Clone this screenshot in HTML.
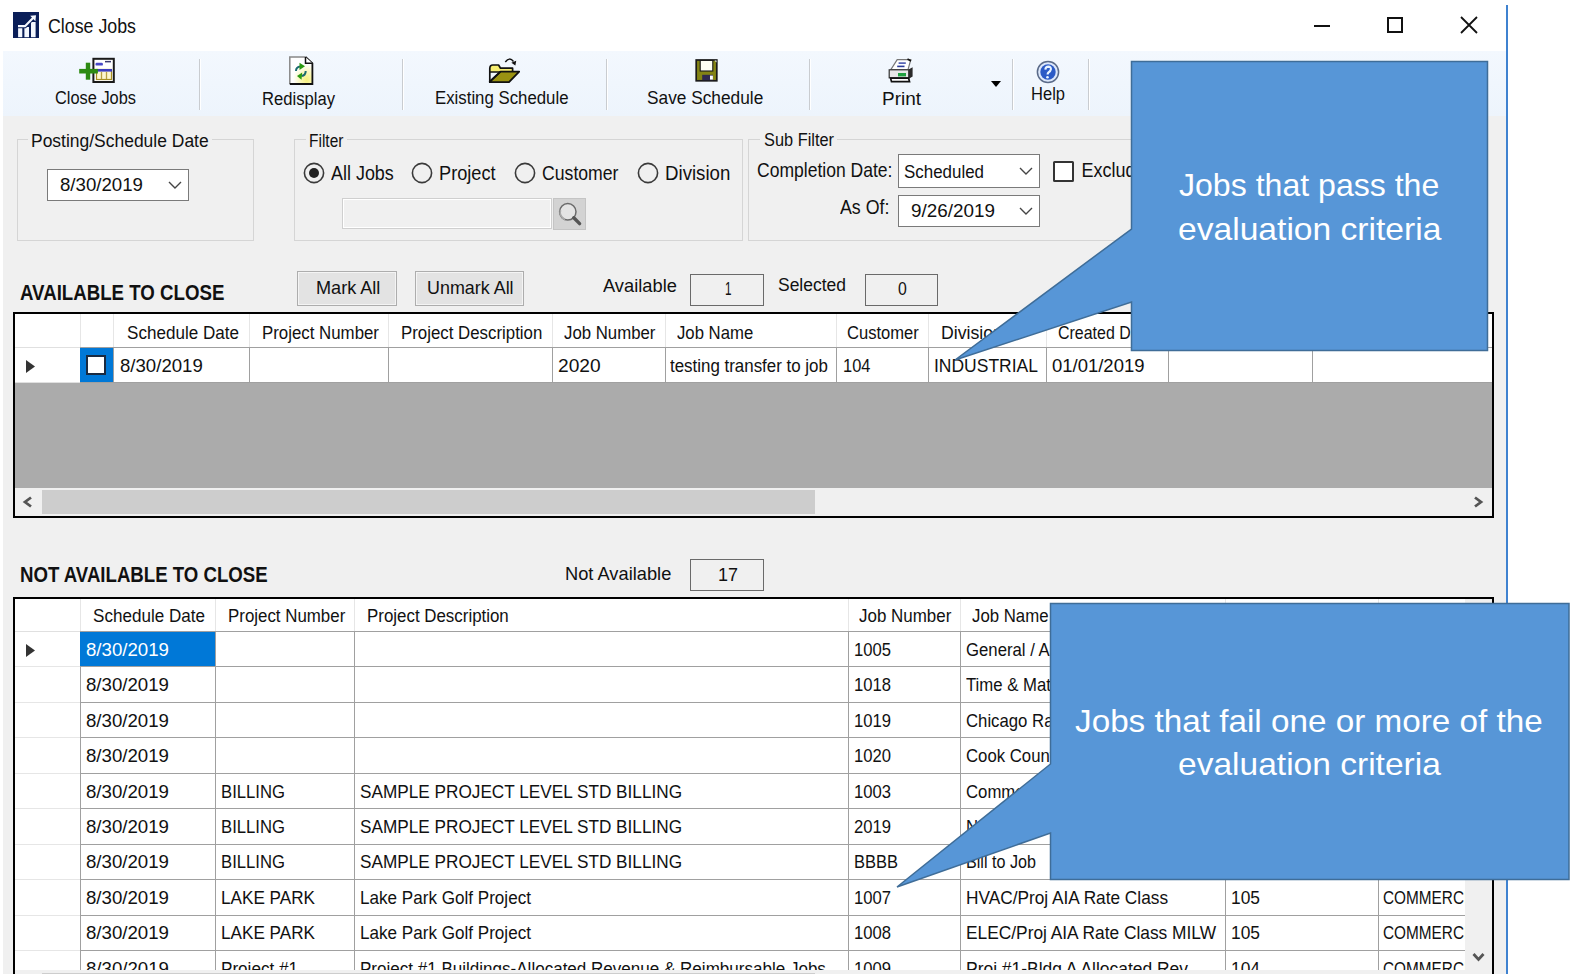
<!DOCTYPE html>
<html><head><meta charset="utf-8"><style>
html,body{margin:0;padding:0;}
body{width:1574px;height:974px;position:relative;overflow:hidden;background:#fff;font-family:"Liberation Sans",sans-serif;}
.r{position:absolute;}
.t{position:absolute;white-space:nowrap;line-height:1;transform-origin:0 0;}
.clip2{position:absolute;left:0;top:0;width:1465px;height:970px;overflow:hidden;}
</style></head><body>
<div class="r" style="left:3px;top:51px;width:1503px;height:923px;background:#f0f0f0"></div>
<svg class="r" style="left:13px;top:12px" width="26" height="26" viewBox="0 0 26 26">
<rect width="26" height="26" fill="#0a1e58"/>
<rect x="5.1" y="15.6" width="4.2" height="9.6" fill="#f4f8ff"/><rect x="11.4" y="15" width="4.6" height="10.2" fill="#f4f8ff"/><rect x="18" y="10" width="4.6" height="15.2" fill="#f4f8ff"/>
<path d="M5 14.2 H12 L20.5 5.6" stroke="#0a1e58" stroke-width="4" fill="none"/>
<path d="M5 14.2 H12 L20.5 5.6" stroke="#f4f8ff" stroke-width="2.2" fill="none"/>
<path d="M17.2 3.8 L23 3.3 L22.4 9.2Z" fill="#f4f8ff"/>
</svg>
<div class="t" style="left:48.0px;top:16.9px;font-size:19px;color:#111;transform-origin:0 16.09px;transform:scale(0.9365,1.070);">Close Jobs</div>
<div class="r" style="left:1314px;top:25px;width:16px;height:2px;background:#111"></div>
<div class="r" style="left:1387px;top:17px;width:16px;height:16px;border:2px solid #111;box-sizing:border-box"></div>
<svg class="r" style="left:1460px;top:16px" width="18" height="18" viewBox="0 0 18 18"><path d="M1 1L17 17M17 1L1 17" stroke="#111" stroke-width="1.8"/></svg>
<div class="r" style="left:1506px;top:5px;width:2px;height:969px;background:#3f82d0"></div>
<div class="r" style="left:3px;top:51px;width:1503px;height:65px;background:linear-gradient(#f3f8fe,#edf4fc)"></div>
<div class="r" style="left:199px;top:59px;width:1px;height:51px;background:#c9ccd0"></div>
<div class="r" style="left:200px;top:59px;width:1px;height:51px;background:#ffffff"></div>
<div class="r" style="left:402px;top:59px;width:1px;height:51px;background:#c9ccd0"></div>
<div class="r" style="left:403px;top:59px;width:1px;height:51px;background:#ffffff"></div>
<div class="r" style="left:606px;top:59px;width:1px;height:51px;background:#c9ccd0"></div>
<div class="r" style="left:607px;top:59px;width:1px;height:51px;background:#ffffff"></div>
<div class="r" style="left:809px;top:59px;width:1px;height:51px;background:#c9ccd0"></div>
<div class="r" style="left:810px;top:59px;width:1px;height:51px;background:#ffffff"></div>
<div class="r" style="left:1012px;top:59px;width:1px;height:51px;background:#c9ccd0"></div>
<div class="r" style="left:1013px;top:59px;width:1px;height:51px;background:#ffffff"></div>
<div class="r" style="left:1088px;top:59px;width:1px;height:51px;background:#c9ccd0"></div>
<div class="r" style="left:1089px;top:59px;width:1px;height:51px;background:#ffffff"></div>
<svg class="r" style="left:70px;top:50px" width="60" height="40" viewBox="0 0 60 40">
<rect x="23.4" y="8.8" width="20.4" height="23.2" fill="#fff" stroke="#1a1a1a" stroke-width="2"/>
<rect x="26.5" y="19.5" width="15" height="10" fill="#fdf6d0" stroke="#a89020" stroke-width="1.2"/>
<rect x="26" y="19" width="16" height="2.6" fill="#3c3cc0"/>
<path d="M31.5 22v7M36.5 22v7" stroke="#b8a040" stroke-width="1.3"/>
<rect x="25.5" y="12.7" width="7.4" height="2.9" rx="1.2" fill="#4848c8"/><rect x="35" y="10.9" width="6" height="1.5" fill="#3a3a70"/>
<rect x="9.2" y="18.9" width="18.7" height="4.6" fill="#2d8a12"/><rect x="15.8" y="12.7" width="4.4" height="17" fill="#2d8a12"/>
</svg>
<div class="t" style="left:55.0px;top:88.8px;font-size:18px;color:#111;transform-origin:0 15.24px;transform:scale(0.9095,1.070);">Close Jobs</div>
<svg class="r" style="left:280px;top:50px" width="40" height="40" viewBox="0 0 40 40">
<defs><radialGradient id="yg" cx="0.75" cy="0.85" r="0.6"><stop offset="0" stop-color="#f6f07a"/><stop offset="1" stop-color="#ffffff"/></radialGradient></defs>
<path d="M9.8 7 H25.5 L32.4 13.3 V34 H9.8 Z" fill="url(#yg)"/>
<path d="M9.8 34 V7 H25.5" stroke="#888" stroke-width="1.5" fill="none"/>
<path d="M25.5 7 L32.4 13.3 V34 H9.8" stroke="#111" stroke-width="1.8" fill="none"/>
<path d="M25.5 7 V13.3 H32.4" stroke="#111" stroke-width="1.5" fill="#fff"/>
<path d="M16 21 Q16 17 20.5 16.5" stroke="#1a6a70" stroke-width="2" fill="none"/>
<path d="M19.5 12.8 L25 16.3 L19.5 20 Z" fill="#2a9a10"/>
<path d="M25.7 21 Q25.7 25.5 21.5 26" stroke="#1a6a70" stroke-width="2" fill="none"/>
<path d="M22.2 22.5 L17 26 L21.5 29.8 Z" fill="#2a9a10"/>
</svg>
<div class="t" style="left:262.0px;top:89.6px;font-size:18px;color:#111;transform-origin:0 15.24px;transform:scale(0.9233,1.070);">Redisplay</div>
<svg class="r" style="left:480px;top:50px" width="50" height="40" viewBox="0 0 50 40">
<path d="M9.8 32 V18.6 Q9.8 15 12.8 15 H18.6 L20.5 18.2 H32.6 V22 H9.8Z" fill="#f6ee70" stroke="#111" stroke-width="1.7" stroke-linejoin="round"/>
<path d="M20.5 21.7 H39.2 L29 32.2 H9.8 V31.5 Z" fill="#9a9212" stroke="#111" stroke-width="1.8" stroke-linejoin="round"/>
<path d="M9.8 31.8 L20.5 21.7" stroke="#111" stroke-width="1.6"/>
<path d="M25.3 12 Q29.5 6.5 33.5 11.5" stroke="#111" stroke-width="1.5" fill="none"/>
<path d="M31.3 12.8 L36.2 10.8 L35.4 15.6 Z" fill="#111"/>
</svg>
<div class="t" style="left:434.7px;top:88.8px;font-size:18px;color:#111;transform-origin:0 15.24px;transform:scale(0.9329,1.070);">Existing Schedule</div>
<svg class="r" style="left:690px;top:52px" width="34" height="36" viewBox="0 0 34 36">
<rect x="6.2" y="8" width="20.6" height="20.8" fill="#848414" stroke="#1a1a1a" stroke-width="1.7"/>
<rect x="10.2" y="8.4" width="12.6" height="10.6" fill="#fffff4" stroke="#1a1a1a" stroke-width="1.1"/>
<rect x="12.2" y="22.8" width="10.8" height="5.4" fill="#302a50"/>
<rect x="20" y="23.6" width="2.9" height="4" fill="#fff"/>
<path d="M24.5 8.5 L26.5 8.5 L26.5 10.5Z" fill="#fff"/>
</svg>
<div class="t" style="left:647.0px;top:88.8px;font-size:18px;color:#111;transform-origin:0 15.24px;transform:scale(0.9603,1.070);">Save Schedule</div>
<svg class="r" style="left:882px;top:52px" width="40" height="36" viewBox="0 0 40 36">
<path d="M15.2 7.6 H28.8 L26 17.6 H8.8 Z" fill="#fff" stroke="#777" stroke-width="1.2"/>
<path d="M16.6 11.1 H23.8" stroke="#3a4aa8" stroke-width="1.5"/><path d="M15.2 14.4 H22.5" stroke="#2a3a98" stroke-width="1.6"/>
<path d="M26.5 17.6 L30.6 15.2 V24.6 L26.5 27 Z" fill="#2a2a2a"/>
<rect x="7.2" y="17.8" width="19.5" height="8" fill="#e6e6e6" stroke="#333" stroke-width="1.2"/>
<rect x="16" y="21" width="8" height="3.4" fill="#20a040"/>
<path d="M8.6 26.2 H26.6 L27.5 29.6 H9.5 Z" fill="#fff" stroke="#111" stroke-width="1.7"/>
<path d="M25.5 7 L29 9" stroke="#111" stroke-width="1.6"/>
</svg>
<div class="t" style="left:882.0px;top:90.0px;font-size:18px;color:#111;transform-origin:0 15.24px;transform:scale(1.0536,1.070);">Print</div>
<svg class="r" style="left:991px;top:81px" width="10" height="7" viewBox="0 0 10 7"><path d="M0 0H10L5 6Z" fill="#000"/></svg>
<svg class="r" style="left:1036px;top:60px" width="24" height="24" viewBox="0 0 24 24">
<circle cx="12" cy="12" r="10.6" fill="#dde8fb" stroke="#5a6a88" stroke-width="1.5"/>
<circle cx="12" cy="12" r="7.7" fill="#2b5ac6"/>
<path d="M9.3 9.6 Q9.6 6.6 12.4 6.6 Q15.2 6.8 14.9 9.3 Q14.6 11 12.6 12.4 Q11.6 13.3 11.6 14.6" stroke="#e8f4ff" stroke-width="2.1" fill="none"/>
<circle cx="11.5" cy="17.2" r="1.3" fill="#e8f4ff"/>
</svg>
<div class="t" style="left:1031.0px;top:85.4px;font-size:18px;color:#111;transform-origin:0 15.24px;transform:scale(0.9181,1.070);">Help</div>
<div class="r" style="left:17px;top:139px;width:237px;height:102px;border:1px solid #d5d5d5;box-sizing:border-box"></div>
<div class="r" style="left:28px;top:137px;width:184px;height:5px;background:#f0f0f0"></div>
<div class="t" style="left:31.0px;top:131.5px;font-size:18px;color:#111;transform-origin:0 15.24px;transform:scale(0.9702,1.070);">Posting/Schedule Date</div>
<div class="r" style="left:294px;top:139px;width:449px;height:102px;border:1px solid #d5d5d5;box-sizing:border-box"></div>
<div class="r" style="left:306px;top:137px;width:41px;height:5px;background:#f0f0f0"></div>
<div class="t" style="left:309.0px;top:131.6px;font-size:18px;color:#111;transform-origin:0 15.24px;transform:scale(0.8597,1.070);">Filter</div>
<div class="r" style="left:748px;top:139px;width:452px;height:102px;border:1px solid #d5d5d5;box-sizing:border-box"></div>
<div class="r" style="left:760px;top:137px;width:77px;height:5px;background:#f0f0f0"></div>
<div class="t" style="left:763.5px;top:130.8px;font-size:18px;color:#111;transform-origin:0 15.24px;transform:scale(0.9085,1.070);">Sub Filter</div>
<div class="r" style="left:47px;top:169px;width:142px;height:32px;background:#fff;border:1.5px solid #7a7a7a;box-sizing:border-box"></div>
<div class="t" style="left:60.0px;top:176.3px;font-size:18px;color:#111;transform-origin:0 15.24px;transform:scale(1.0361,1.070);">8/30/2019</div>
<svg class="r" style="left:167.5px;top:181.0px" width="14" height="9" viewBox="0 0 14 9"><path d="M1 1L7 7L13 1" stroke="#444" stroke-width="1.4" fill="none"/></svg>
<svg class="r" style="left:303px;top:162px" width="22" height="22" viewBox="0 0 22 22"><circle cx="11" cy="11" r="9.6" fill="none" stroke="#3a3a3a" stroke-width="1.6"/><circle cx="11" cy="11" r="5" fill="#222"/></svg>
<div class="t" style="left:331.0px;top:165.3px;font-size:18px;color:#111;transform-origin:0 15.24px;transform:scale(0.9963,1.130);">All Jobs</div>
<svg class="r" style="left:411px;top:162px" width="22" height="22" viewBox="0 0 22 22"><circle cx="11" cy="11" r="9.6" fill="none" stroke="#3a3a3a" stroke-width="1.6"/></svg>
<div class="t" style="left:439.0px;top:165.3px;font-size:18px;color:#111;transform-origin:0 15.24px;transform:scale(1.0102,1.130);">Project</div>
<svg class="r" style="left:514px;top:162px" width="22" height="22" viewBox="0 0 22 22"><circle cx="11" cy="11" r="9.6" fill="none" stroke="#3a3a3a" stroke-width="1.6"/></svg>
<div class="t" style="left:542.0px;top:165.3px;font-size:18px;color:#111;transform-origin:0 15.24px;transform:scale(0.9802,1.130);">Customer</div>
<svg class="r" style="left:636.5px;top:162px" width="22" height="22" viewBox="0 0 22 22"><circle cx="11" cy="11" r="9.6" fill="none" stroke="#3a3a3a" stroke-width="1.6"/></svg>
<div class="t" style="left:665.0px;top:165.3px;font-size:18px;color:#111;transform-origin:0 15.24px;transform:scale(1.0376,1.130);">Division</div>
<div class="r" style="left:342px;top:198px;width:210px;height:31px;background:#f0f0f0;border:1.5px solid #cfcfcf;box-shadow:inset 1px 1px 0 #fff, inset -1px -1px 0 #fff;box-sizing:border-box"></div>
<svg class="r" style="left:553px;top:198px" width="33" height="32" viewBox="0 0 33 32">
<rect x="0.5" y="0.5" width="32" height="31" fill="#d3d3d3" stroke="#c4c4c4" stroke-width="1"/>
<circle cx="14.8" cy="13.8" r="8.2" fill="#e4e4e4" stroke="#6a6a6a" stroke-width="1.5"/>
<path d="M7.5 12 A8 8 0 0 0 12 21.5" stroke="#aaa" stroke-width="1.6" fill="none"/>
<path d="M20.8 19.8 L26.6 25.6" stroke="#555" stroke-width="3.4" stroke-linecap="round"/>
</svg>
<div class="t" style="left:756.5px;top:162.0px;font-size:18px;color:#111;transform-origin:0 15.24px;transform:scale(0.9741,1.120);">Completion Date:</div>
<div class="r" style="left:898px;top:154px;width:142px;height:34px;background:#fff;border:1.5px solid #7a7a7a;box-sizing:border-box"></div>
<div class="t" style="left:904.0px;top:162.8px;font-size:18px;color:#111;transform-origin:0 15.24px;transform:scale(0.9401,1.070);">Scheduled</div>
<svg class="r" style="left:1018.5px;top:167.0px" width="14" height="9" viewBox="0 0 14 9"><path d="M1 1L7 7L13 1" stroke="#444" stroke-width="1.4" fill="none"/></svg>
<div class="r" style="left:1053px;top:161px;width:21px;height:21px;background:#fff;border:2px solid #333;border-radius:1.5px;box-sizing:border-box"></div>
<div class="t" style="left:1081.5px;top:161.8px;font-size:18px;color:#111;transform-origin:0 15.24px;transform:scale(1.0000,1.120);">Exclude Closed</div>
<div class="t" style="left:840.0px;top:199.4px;font-size:18px;color:#111;transform-origin:0 15.24px;transform:scale(0.9880,1.120);">As Of:</div>
<div class="r" style="left:898px;top:195px;width:142px;height:32px;background:#fff;border:1.5px solid #7a7a7a;box-sizing:border-box"></div>
<div class="t" style="left:910.8px;top:201.8px;font-size:18px;color:#111;transform-origin:0 15.24px;transform:scale(1.0486,1.070);">9/26/2019</div>
<svg class="r" style="left:1018.5px;top:207.0px" width="14" height="9" viewBox="0 0 14 9"><path d="M1 1L7 7L13 1" stroke="#444" stroke-width="1.4" fill="none"/></svg>
<div class="t" style="left:19.6px;top:283.7px;font-size:19px;font-weight:bold;color:#111;transform-origin:0 16.09px;transform:scale(0.9828,1.120);">AVAILABLE TO CLOSE</div>
<div class="r" style="left:297px;top:271px;width:100px;height:35px;background:#e3e3e3;border:1.5px solid #adadad;box-shadow:inset 1px 1px 0 #f4f4f4, inset -1px -1px 0 #f4f4f4;box-sizing:border-box"></div>
<div class="t" style="left:315.6px;top:279.0px;font-size:18px;color:#111;transform-origin:0 15.24px;transform:scale(1.0060,1.070);">Mark All</div>
<div class="r" style="left:415px;top:271px;width:109px;height:35px;background:#e3e3e3;border:1.5px solid #adadad;box-shadow:inset 1px 1px 0 #f4f4f4, inset -1px -1px 0 #f4f4f4;box-sizing:border-box"></div>
<div class="t" style="left:426.8px;top:279.0px;font-size:18px;color:#111;transform-origin:0 15.24px;transform:scale(0.9950,1.070);">Unmark All</div>
<div class="t" style="left:603.4px;top:277.4px;font-size:18px;color:#111;transform-origin:0 15.24px;transform:scale(1.0160,1.070);">Available</div>
<div class="r" style="left:690px;top:274px;width:74px;height:32px;border:1.5px solid #6a6a6a;box-sizing:border-box"></div>
<div class="t" style="left:725.0px;top:279.8px;font-size:18px;color:#111;transform-origin:0 15.24px;transform:scale(0.6490,1.070);">1</div>
<div class="t" style="left:778.0px;top:276.2px;font-size:18px;color:#111;transform-origin:0 15.24px;transform:scale(0.9706,1.070);">Selected</div>
<div class="r" style="left:865px;top:274px;width:73px;height:32px;border:1.5px solid #6a6a6a;box-sizing:border-box"></div>
<div class="t" style="left:897.5px;top:279.8px;font-size:18px;color:#111;transform-origin:0 15.24px;transform:scale(0.8786,1.070);">0</div>
<div class="r" style="left:13px;top:312px;width:1481px;height:206px;background:#fff;border:2px solid #000;box-sizing:border-box"></div>
<div class="r" style="left:80px;top:314px;width:1px;height:33px;background:#e6e6e6"></div>
<div class="r" style="left:80px;top:348px;width:1px;height:34px;background:#a0a0a0"></div>
<div class="r" style="left:113px;top:314px;width:1px;height:33px;background:#e6e6e6"></div>
<div class="r" style="left:113px;top:348px;width:1px;height:34px;background:#a0a0a0"></div>
<div class="r" style="left:249px;top:314px;width:1px;height:33px;background:#e6e6e6"></div>
<div class="r" style="left:249px;top:348px;width:1px;height:34px;background:#a0a0a0"></div>
<div class="r" style="left:388px;top:314px;width:1px;height:33px;background:#e6e6e6"></div>
<div class="r" style="left:388px;top:348px;width:1px;height:34px;background:#a0a0a0"></div>
<div class="r" style="left:552px;top:314px;width:1px;height:33px;background:#e6e6e6"></div>
<div class="r" style="left:552px;top:348px;width:1px;height:34px;background:#a0a0a0"></div>
<div class="r" style="left:665px;top:314px;width:1px;height:33px;background:#e6e6e6"></div>
<div class="r" style="left:665px;top:348px;width:1px;height:34px;background:#a0a0a0"></div>
<div class="r" style="left:836px;top:314px;width:1px;height:33px;background:#e6e6e6"></div>
<div class="r" style="left:836px;top:348px;width:1px;height:34px;background:#a0a0a0"></div>
<div class="r" style="left:928px;top:314px;width:1px;height:33px;background:#e6e6e6"></div>
<div class="r" style="left:928px;top:348px;width:1px;height:34px;background:#a0a0a0"></div>
<div class="r" style="left:1046px;top:314px;width:1px;height:33px;background:#e6e6e6"></div>
<div class="r" style="left:1046px;top:348px;width:1px;height:34px;background:#a0a0a0"></div>
<div class="r" style="left:1168px;top:314px;width:1px;height:33px;background:#e6e6e6"></div>
<div class="r" style="left:1168px;top:348px;width:1px;height:34px;background:#a0a0a0"></div>
<div class="r" style="left:1312px;top:314px;width:1px;height:33px;background:#e6e6e6"></div>
<div class="r" style="left:1312px;top:348px;width:1px;height:34px;background:#a0a0a0"></div>
<div class="r" style="left:15px;top:347px;width:1477px;height:1px;background:#a0a0a0"></div>
<div class="r" style="left:15px;top:382px;width:1477px;height:1px;background:#a0a0a0"></div>
<div class="r" style="left:15px;top:347px;width:65px;height:1px;background:#e0e0e0"></div>
<div class="r" style="left:15px;top:382px;width:65px;height:1px;background:#e0e0e0"></div>
<div class="r" style="left:15px;top:383px;width:1477px;height:105px;background:#ababab"></div>
<div class="r" style="left:15px;top:488px;width:1477px;height:28px;background:#f0f0f0"></div>
<div class="r" style="left:42px;top:490px;width:773px;height:24px;background:#cdcdcd"></div>
<svg class="r" style="left:21px;top:495px" width="14" height="14" viewBox="0 0 14 14"><path d="M10 2.5L4 7L10 11.5" stroke="#555" stroke-width="2.8" fill="none"/></svg>
<svg class="r" style="left:1471px;top:495px" width="14" height="14" viewBox="0 0 14 14"><path d="M4 2.5L10 7L4 11.5" stroke="#555" stroke-width="2.8" fill="none"/></svg>
<svg class="r" style="left:25px;top:359px" width="11" height="15" viewBox="0 0 11 15"><path d="M1 1L10 7.5L1 14Z" fill="#333"/></svg>
<div class="r" style="left:80px;top:348px;width:33px;height:34px;background:#0078d7"></div>
<div class="r" style="left:86px;top:355px;width:20px;height:20px;background:#fff;border:2px solid #1a2a40;box-sizing:border-box"></div>
<div class="t" style="left:126.7px;top:323.5px;font-size:18px;color:#111;transform-origin:0 15.24px;transform:scale(0.9483,1.070);">Schedule Date</div>
<div class="t" style="left:262.0px;top:323.5px;font-size:18px;color:#111;transform-origin:0 15.24px;transform:scale(0.9354,1.070);">Project Number</div>
<div class="t" style="left:401.3px;top:323.5px;font-size:18px;color:#111;transform-origin:0 15.24px;transform:scale(0.9352,1.070);">Project Description</div>
<div class="t" style="left:564.0px;top:323.5px;font-size:18px;color:#111;transform-origin:0 15.24px;transform:scale(0.9329,1.070);">Job Number</div>
<div class="t" style="left:677.3px;top:323.5px;font-size:18px;color:#111;transform-origin:0 15.24px;transform:scale(0.9286,1.070);">Job Name</div>
<div class="t" style="left:847.4px;top:323.5px;font-size:18px;color:#111;transform-origin:0 15.24px;transform:scale(0.9200,1.070);">Customer</div>
<div class="t" style="left:940.5px;top:323.5px;font-size:18px;color:#111;transform-origin:0 15.24px;transform:scale(0.9836,1.070);">Division</div>
<div class="t" style="left:1058.0px;top:323.5px;font-size:18px;color:#111;transform-origin:0 15.24px;transform:scale(0.8871,1.070);">Created Date</div>
<div class="t" style="left:120.0px;top:356.8px;font-size:18px;color:#111;transform-origin:0 15.24px;transform:scale(1.0336,1.070);">8/30/2019</div>
<div class="t" style="left:558.0px;top:356.8px;font-size:18px;color:#111;transform-origin:0 15.24px;transform:scale(1.0633,1.070);">2020</div>
<div class="t" style="left:669.8px;top:356.8px;font-size:18px;color:#111;transform-origin:0 15.24px;transform:scale(0.9391,1.070);">testing transfer to job</div>
<div class="t" style="left:843.0px;top:356.8px;font-size:18px;color:#111;transform-origin:0 15.24px;transform:scale(0.9119,1.070);">104</div>
<div class="t" style="left:934.0px;top:356.8px;font-size:18px;color:#111;transform-origin:0 15.24px;transform:scale(0.9718,1.070);">INDUSTRIAL</div>
<div class="t" style="left:1052.0px;top:356.8px;font-size:18px;color:#111;transform-origin:0 15.24px;transform:scale(1.0264,1.070);">01/01/2019</div>
<div class="t" style="left:20.3px;top:565.7px;font-size:19px;font-weight:bold;color:#111;transform-origin:0 16.09px;transform:scale(0.9804,1.120);">NOT AVAILABLE TO CLOSE</div>
<div class="t" style="left:564.7px;top:565.4px;font-size:18px;color:#111;transform-origin:0 15.24px;transform:scale(1.0148,1.070);">Not Available</div>
<div class="r" style="left:690px;top:559px;width:74px;height:32px;border:1.5px solid #6a6a6a;box-sizing:border-box"></div>
<div class="t" style="left:718.0px;top:565.8px;font-size:18px;color:#111;transform-origin:0 15.24px;transform:scale(0.9984,1.070);">17</div>
<div class="r" style="left:13px;top:597px;width:1481px;height:393px;background:#fff;border:2px solid #000;box-sizing:border-box"></div>
<div class="r" style="left:80px;top:599px;width:1px;height:32px;background:#e6e6e6"></div>
<div class="r" style="left:80px;top:631px;width:1px;height:339px;background:#a0a0a0"></div>
<div class="r" style="left:215px;top:599px;width:1px;height:32px;background:#e6e6e6"></div>
<div class="r" style="left:215px;top:631px;width:1px;height:339px;background:#a0a0a0"></div>
<div class="r" style="left:354px;top:599px;width:1px;height:32px;background:#e6e6e6"></div>
<div class="r" style="left:354px;top:631px;width:1px;height:339px;background:#a0a0a0"></div>
<div class="r" style="left:848px;top:599px;width:1px;height:32px;background:#e6e6e6"></div>
<div class="r" style="left:848px;top:631px;width:1px;height:339px;background:#a0a0a0"></div>
<div class="r" style="left:960px;top:599px;width:1px;height:32px;background:#e6e6e6"></div>
<div class="r" style="left:960px;top:631px;width:1px;height:339px;background:#a0a0a0"></div>
<div class="r" style="left:1225px;top:599px;width:1px;height:32px;background:#e6e6e6"></div>
<div class="r" style="left:1225px;top:631px;width:1px;height:339px;background:#a0a0a0"></div>
<div class="r" style="left:1378px;top:599px;width:1px;height:32px;background:#e6e6e6"></div>
<div class="r" style="left:1378px;top:631px;width:1px;height:339px;background:#a0a0a0"></div>
<div class="r" style="left:15px;top:631px;width:1450px;height:1px;background:#a0a0a0"></div>
<div class="r" style="left:15px;top:631px;width:65px;height:1px;background:#e0e0e0"></div>
<div class="r" style="left:80px;top:666px;width:1385px;height:1px;background:#a0a0a0"></div>
<div class="r" style="left:15px;top:666px;width:65px;height:1px;background:#e6e6e6"></div>
<div class="r" style="left:80px;top:702px;width:1385px;height:1px;background:#a0a0a0"></div>
<div class="r" style="left:15px;top:702px;width:65px;height:1px;background:#e6e6e6"></div>
<div class="r" style="left:80px;top:737px;width:1385px;height:1px;background:#a0a0a0"></div>
<div class="r" style="left:15px;top:737px;width:65px;height:1px;background:#e6e6e6"></div>
<div class="r" style="left:80px;top:773px;width:1385px;height:1px;background:#a0a0a0"></div>
<div class="r" style="left:15px;top:773px;width:65px;height:1px;background:#e6e6e6"></div>
<div class="r" style="left:80px;top:808px;width:1385px;height:1px;background:#a0a0a0"></div>
<div class="r" style="left:15px;top:808px;width:65px;height:1px;background:#e6e6e6"></div>
<div class="r" style="left:80px;top:844px;width:1385px;height:1px;background:#a0a0a0"></div>
<div class="r" style="left:15px;top:844px;width:65px;height:1px;background:#e6e6e6"></div>
<div class="r" style="left:80px;top:879px;width:1385px;height:1px;background:#a0a0a0"></div>
<div class="r" style="left:15px;top:879px;width:65px;height:1px;background:#e6e6e6"></div>
<div class="r" style="left:80px;top:915px;width:1385px;height:1px;background:#a0a0a0"></div>
<div class="r" style="left:15px;top:915px;width:65px;height:1px;background:#e6e6e6"></div>
<div class="r" style="left:80px;top:950px;width:1385px;height:1px;background:#a0a0a0"></div>
<div class="r" style="left:15px;top:950px;width:65px;height:1px;background:#e6e6e6"></div>
<div class="r" style="left:1465px;top:599px;width:27px;height:375px;background:#f0f0f0"></div>
<svg class="r" style="left:1471px;top:950px" width="15" height="14" viewBox="0 0 15 14"><path d="M2.5 4L7.5 9.5L12.5 4" stroke="#555" stroke-width="2.8" fill="none"/></svg>
<div class="r" style="left:15px;top:970px;width:1450px;height:4px;background:#f0f0f0"></div>
<div class="r" style="left:42px;top:973px;width:773px;height:1px;background:#cdcdcd"></div>
<svg class="r" style="left:25px;top:643px" width="11" height="15" viewBox="0 0 11 15"><path d="M1 1L10 7.5L1 14Z" fill="#333"/></svg>
<div class="r" style="left:80px;top:632px;width:135px;height:34px;background:#0078d7"></div>
<div class="t" style="left:93.0px;top:606.8px;font-size:18px;color:#111;transform-origin:0 15.24px;transform:scale(0.9483,1.070);">Schedule Date</div>
<div class="t" style="left:228.0px;top:606.8px;font-size:18px;color:#111;transform-origin:0 15.24px;transform:scale(0.9378,1.070);">Project Number</div>
<div class="t" style="left:367.0px;top:606.8px;font-size:18px;color:#111;transform-origin:0 15.24px;transform:scale(0.9385,1.070);">Project Description</div>
<div class="t" style="left:859.0px;top:606.8px;font-size:18px;color:#111;transform-origin:0 15.24px;transform:scale(0.9411,1.070);">Job Number</div>
<div class="t" style="left:972.0px;top:606.8px;font-size:18px;color:#111;transform-origin:0 15.24px;transform:scale(0.9322,1.070);">Job Name</div>
<div class="t" style="left:1237.0px;top:606.8px;font-size:18px;color:#111;transform-origin:0 15.24px;transform:scale(0.9225,1.070);">Customer</div>
<div class="t" style="left:1390.0px;top:606.8px;font-size:18px;color:#111;transform-origin:0 15.24px;transform:scale(0.9836,1.070);">Division</div>
<div class="clip2">
<div class="t" style="left:86.0px;top:640.8px;font-size:18px;color:#fff;transform-origin:0 15.24px;transform:scale(1.0361,1.070);">8/30/2019</div>
<div class="r" style="left:849px;top:632px;width:111px;height:34px;overflow:hidden"><div class="t" style="left:5.0px;top:8.8px;font-size:18px;color:#111;transform-origin:0 15.24px;transform:scale(0.9236,1.070);">1005</div></div>
<div class="r" style="left:961px;top:632px;width:264px;height:34px;overflow:hidden"><div class="t" style="left:4.5px;top:8.8px;font-size:18px;color:#111;transform-origin:0 15.24px;transform:scale(0.9300,1.070);">General / Admin</div></div>
<div class="t" style="left:86.0px;top:676.2px;font-size:18px;color:#111;transform-origin:0 15.24px;transform:scale(1.0361,1.070);">8/30/2019</div>
<div class="r" style="left:849px;top:667px;width:111px;height:35px;overflow:hidden"><div class="t" style="left:5.0px;top:9.2px;font-size:18px;color:#111;transform-origin:0 15.24px;transform:scale(0.9236,1.070);">1018</div></div>
<div class="r" style="left:961px;top:667px;width:264px;height:35px;overflow:hidden"><div class="t" style="left:4.5px;top:9.2px;font-size:18px;color:#111;transform-origin:0 15.24px;transform:scale(0.9300,1.070);">Time &amp; Material</div></div>
<div class="t" style="left:86.0px;top:711.6px;font-size:18px;color:#111;transform-origin:0 15.24px;transform:scale(1.0361,1.070);">8/30/2019</div>
<div class="r" style="left:849px;top:703px;width:111px;height:34px;overflow:hidden"><div class="t" style="left:5.0px;top:8.6px;font-size:18px;color:#111;transform-origin:0 15.24px;transform:scale(0.9236,1.070);">1019</div></div>
<div class="r" style="left:961px;top:703px;width:264px;height:34px;overflow:hidden"><div class="t" style="left:4.5px;top:8.6px;font-size:18px;color:#111;transform-origin:0 15.24px;transform:scale(0.9300,1.070);">Chicago Rail</div></div>
<div class="t" style="left:86.0px;top:747.1px;font-size:18px;color:#111;transform-origin:0 15.24px;transform:scale(1.0361,1.070);">8/30/2019</div>
<div class="r" style="left:849px;top:738px;width:111px;height:35px;overflow:hidden"><div class="t" style="left:5.0px;top:9.1px;font-size:18px;color:#111;transform-origin:0 15.24px;transform:scale(0.9236,1.070);">1020</div></div>
<div class="r" style="left:961px;top:738px;width:264px;height:35px;overflow:hidden"><div class="t" style="left:4.5px;top:9.1px;font-size:18px;color:#111;transform-origin:0 15.24px;transform:scale(0.9300,1.070);">Cook County</div></div>
<div class="t" style="left:86.0px;top:782.5px;font-size:18px;color:#111;transform-origin:0 15.24px;transform:scale(1.0361,1.070);">8/30/2019</div>
<div class="r" style="left:216px;top:774px;width:138px;height:34px;overflow:hidden"><div class="t" style="left:5.0px;top:8.5px;font-size:18px;color:#111;transform-origin:0 15.24px;transform:scale(0.9271,1.070);">BILLING</div></div>
<div class="r" style="left:355px;top:774px;width:493px;height:34px;overflow:hidden"><div class="t" style="left:5.0px;top:8.5px;font-size:18px;color:#111;transform-origin:0 15.24px;transform:scale(0.9553,1.070);">SAMPLE PROJECT LEVEL STD BILLING</div></div>
<div class="r" style="left:849px;top:774px;width:111px;height:34px;overflow:hidden"><div class="t" style="left:5.0px;top:8.5px;font-size:18px;color:#111;transform-origin:0 15.24px;transform:scale(0.9236,1.070);">1003</div></div>
<div class="r" style="left:961px;top:774px;width:264px;height:34px;overflow:hidden"><div class="t" style="left:4.5px;top:8.5px;font-size:18px;color:#111;transform-origin:0 15.24px;transform:scale(0.9300,1.070);">Commercial</div></div>
<div class="t" style="left:86.0px;top:818.0px;font-size:18px;color:#111;transform-origin:0 15.24px;transform:scale(1.0361,1.070);">8/30/2019</div>
<div class="r" style="left:216px;top:809px;width:138px;height:35px;overflow:hidden"><div class="t" style="left:5.0px;top:9.0px;font-size:18px;color:#111;transform-origin:0 15.24px;transform:scale(0.9271,1.070);">BILLING</div></div>
<div class="r" style="left:355px;top:809px;width:493px;height:35px;overflow:hidden"><div class="t" style="left:5.0px;top:9.0px;font-size:18px;color:#111;transform-origin:0 15.24px;transform:scale(0.9553,1.070);">SAMPLE PROJECT LEVEL STD BILLING</div></div>
<div class="r" style="left:849px;top:809px;width:111px;height:35px;overflow:hidden"><div class="t" style="left:5.0px;top:9.0px;font-size:18px;color:#111;transform-origin:0 15.24px;transform:scale(0.9236,1.070);">2019</div></div>
<div class="r" style="left:961px;top:809px;width:264px;height:35px;overflow:hidden"><div class="t" style="left:4.5px;top:9.0px;font-size:18px;color:#111;transform-origin:0 15.24px;transform:scale(0.9300,1.070);">New Job</div></div>
<div class="t" style="left:86.0px;top:853.4px;font-size:18px;color:#111;transform-origin:0 15.24px;transform:scale(1.0361,1.070);">8/30/2019</div>
<div class="r" style="left:216px;top:845px;width:138px;height:34px;overflow:hidden"><div class="t" style="left:5.0px;top:8.4px;font-size:18px;color:#111;transform-origin:0 15.24px;transform:scale(0.9271,1.070);">BILLING</div></div>
<div class="r" style="left:355px;top:845px;width:493px;height:34px;overflow:hidden"><div class="t" style="left:5.0px;top:8.4px;font-size:18px;color:#111;transform-origin:0 15.24px;transform:scale(0.9553,1.070);">SAMPLE PROJECT LEVEL STD BILLING</div></div>
<div class="r" style="left:849px;top:845px;width:111px;height:34px;overflow:hidden"><div class="t" style="left:5.0px;top:8.4px;font-size:18px;color:#111;transform-origin:0 15.24px;transform:scale(0.9167,1.070);">BBBB</div></div>
<div class="r" style="left:961px;top:845px;width:264px;height:34px;overflow:hidden"><div class="t" style="left:4.5px;top:8.4px;font-size:18px;color:#111;transform-origin:0 15.24px;transform:scale(0.8969,1.070);">Bill to Job</div></div>
<div class="t" style="left:86.0px;top:888.8px;font-size:18px;color:#111;transform-origin:0 15.24px;transform:scale(1.0361,1.070);">8/30/2019</div>
<div class="r" style="left:216px;top:880px;width:138px;height:35px;overflow:hidden"><div class="t" style="left:5.0px;top:8.8px;font-size:18px;color:#111;transform-origin:0 15.24px;transform:scale(0.9525,1.070);">LAKE PARK</div></div>
<div class="r" style="left:355px;top:880px;width:493px;height:35px;overflow:hidden"><div class="t" style="left:5.0px;top:8.8px;font-size:18px;color:#111;transform-origin:0 15.24px;transform:scale(0.9494,1.070);">Lake Park Golf Project</div></div>
<div class="r" style="left:849px;top:880px;width:111px;height:35px;overflow:hidden"><div class="t" style="left:5.0px;top:8.8px;font-size:18px;color:#111;transform-origin:0 15.24px;transform:scale(0.9236,1.070);">1007</div></div>
<div class="r" style="left:961px;top:880px;width:264px;height:35px;overflow:hidden"><div class="t" style="left:4.5px;top:8.8px;font-size:18px;color:#111;transform-origin:0 15.24px;transform:scale(0.9586,1.070);">HVAC/Proj AIA Rate Class</div></div>
<div class="r" style="left:1226px;top:880px;width:152px;height:35px;overflow:hidden"><div class="t" style="left:5.0px;top:8.8px;font-size:18px;color:#111;transform-origin:0 15.24px;transform:scale(0.9652,1.070);">105</div></div>
<div class="r" style="left:1379px;top:880px;width:86px;height:35px;overflow:hidden"><div class="t" style="left:4.0px;top:8.8px;font-size:18px;color:#111;transform-origin:0 15.24px;transform:scale(0.8523,1.070);">COMMERCIAL</div></div>
<div class="t" style="left:86.0px;top:924.3px;font-size:18px;color:#111;transform-origin:0 15.24px;transform:scale(1.0361,1.070);">8/30/2019</div>
<div class="r" style="left:216px;top:916px;width:138px;height:34px;overflow:hidden"><div class="t" style="left:5.0px;top:8.3px;font-size:18px;color:#111;transform-origin:0 15.24px;transform:scale(0.9525,1.070);">LAKE PARK</div></div>
<div class="r" style="left:355px;top:916px;width:493px;height:34px;overflow:hidden"><div class="t" style="left:5.0px;top:8.3px;font-size:18px;color:#111;transform-origin:0 15.24px;transform:scale(0.9494,1.070);">Lake Park Golf Project</div></div>
<div class="r" style="left:849px;top:916px;width:111px;height:34px;overflow:hidden"><div class="t" style="left:5.0px;top:8.3px;font-size:18px;color:#111;transform-origin:0 15.24px;transform:scale(0.9236,1.070);">1008</div></div>
<div class="r" style="left:961px;top:916px;width:264px;height:34px;overflow:hidden"><div class="t" style="left:4.5px;top:8.3px;font-size:18px;color:#111;transform-origin:0 15.24px;transform:scale(0.9625,1.070);">ELEC/Proj AIA Rate Class MILW</div></div>
<div class="r" style="left:1226px;top:916px;width:152px;height:34px;overflow:hidden"><div class="t" style="left:5.0px;top:8.3px;font-size:18px;color:#111;transform-origin:0 15.24px;transform:scale(0.9652,1.070);">105</div></div>
<div class="r" style="left:1379px;top:916px;width:86px;height:34px;overflow:hidden"><div class="t" style="left:4.0px;top:8.3px;font-size:18px;color:#111;transform-origin:0 15.24px;transform:scale(0.8523,1.070);">COMMERCIAL</div></div>
<div class="t" style="left:86.0px;top:959.7px;font-size:18px;color:#111;transform-origin:0 15.24px;transform:scale(1.0361,1.070);">8/30/2019</div>
<div class="r" style="left:216px;top:951px;width:138px;height:34px;overflow:hidden"><div class="t" style="left:5.0px;top:8.7px;font-size:18px;color:#111;transform-origin:0 15.24px;transform:scale(0.9499,1.070);">Project #1</div></div>
<div class="r" style="left:355px;top:951px;width:493px;height:34px;overflow:hidden"><div class="t" style="left:5.0px;top:8.7px;font-size:18px;color:#111;transform-origin:0 15.24px;transform:scale(0.9464,1.070);">Project #1 Buildings-Allocated Revenue &amp; Reimbursable Jobs</div></div>
<div class="r" style="left:849px;top:951px;width:111px;height:34px;overflow:hidden"><div class="t" style="left:5.0px;top:8.7px;font-size:18px;color:#111;transform-origin:0 15.24px;transform:scale(0.9236,1.070);">1009</div></div>
<div class="r" style="left:961px;top:951px;width:264px;height:34px;overflow:hidden"><div class="t" style="left:4.5px;top:8.7px;font-size:18px;color:#111;transform-origin:0 15.24px;transform:scale(0.9688,1.070);">Proj #1-Bldg A Allocated Rev</div></div>
<div class="r" style="left:1226px;top:951px;width:152px;height:34px;overflow:hidden"><div class="t" style="left:5.0px;top:8.7px;font-size:18px;color:#111;transform-origin:0 15.24px;transform:scale(0.9652,1.070);">104</div></div>
<div class="r" style="left:1379px;top:951px;width:86px;height:34px;overflow:hidden"><div class="t" style="left:4.0px;top:8.7px;font-size:18px;color:#111;transform-origin:0 15.24px;transform:scale(0.8523,1.070);">COMMERCIAL</div></div>
</div>
<svg class="r" style="left:0;top:0" width="1574" height="974" viewBox="0 0 1574 974">
<path d="M1131.5 61.5H1487.5V350.5H1131.5V302L955 360L1131.5 229Z" fill="#5796d7" stroke="#3f6d98" stroke-width="1.5"/>
<path d="M1050.5 603.5H1569V879.5H1050.5V833L897 887L1050.5 764Z" fill="#5796d7" stroke="#3f6d98" stroke-width="1.5"/>
</svg>
<div class="t" style="left:1178.5px;top:169.1px;font-size:32px;color:#fff;transform-origin:0 27.09px;transform:scale(1.0022,1.000);">Jobs that pass the</div>
<div class="t" style="left:1177.6px;top:212.5px;font-size:32px;color:#fff;transform-origin:0 27.09px;transform:scale(1.0503,1.000);">evaluation criteria</div>
<div class="t" style="left:1075.0px;top:705.2px;font-size:32px;color:#fff;transform-origin:0 27.09px;transform:scale(1.0393,1.000);">Jobs that fail one or more of the</div>
<div class="t" style="left:1178.2px;top:747.8px;font-size:32px;color:#fff;transform-origin:0 27.09px;transform:scale(1.0479,1.000);">evaluation criteria</div>
</body></html>
